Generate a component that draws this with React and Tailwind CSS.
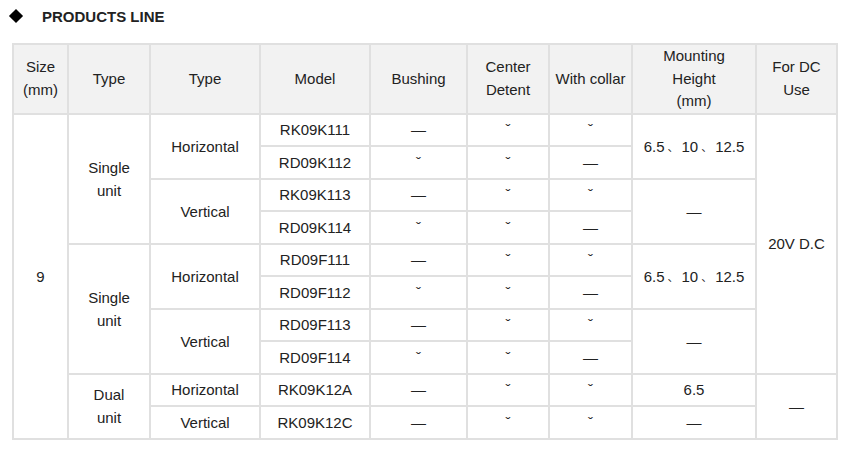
const Y = 'ˇ';
const D = '—';

const td = 'border-2 border-[#e0e0e0] px-1 text-center align-middle';
const th = 'border-2 border-[#e0e0e0] bg-[#f2f2f2] px-1 text-center align-middle font-normal leading-[22.5px]';

const Mark = ({ v }) => <span className="inline-block">{v}</span>;

// virgule CJK rendue petite, comme dans la page d'origine
const Sep = () => (
  <span className="inline-block w-[17px] text-center text-[11px] leading-none align-[1px]">、</span>
);

const Heights = () => (
  <>
    6.5<Sep />10<Sep />12.5
  </>
);

const App = () => {
  return (
    <div className="min-h-screen bg-white text-[#222] font-['Liberation_Sans','Noto_Sans_CJK_SC',sans-serif] text-[15px] leading-[23px]">
      {/* Titre */}
      <div className="h-[32px] pl-[9px] flex items-center">
        <div className="w-[13px] flex justify-center">
          <div className="w-[10px] h-[10px] bg-black rotate-45" />
        </div>
        <span className="ml-[20px] font-bold">PRODUCTS LINE</span>
      </div>

      <div className="pl-[12px] mt-[11px]">
        <table className="table-fixed border-collapse w-[824px]">
          <colgroup>
            <col className="w-[55px]" />
            <col className="w-[82px]" />
            <col className="w-[110px]" />
            <col className="w-[110px]" />
            <col className="w-[97px]" />
            <col className="w-[82px]" />
            <col className="w-[83px]" />
            <col className="w-[124px]" />
            <col className="w-[81px]" />
          </colgroup>
          <thead>
            <tr className="h-[69px]">
              <th className={th}>Size<br />(mm)</th>
              <th className={th}>Type</th>
              <th className={th}>Type</th>
              <th className={th}>Model</th>
              <th className={th}>Bushing</th>
              <th className={th}>Center<br />Detent</th>
              <th className={th}>With collar</th>
              <th className={th}>Mounting<br />Height<br />(mm)</th>
              <th className={th}>For DC<br />Use</th>
            </tr>
          </thead>
          <tbody>
            <tr className="h-[32.5px]">
              <td className={td} rowSpan={10}>9</td>
              <td className={td} rowSpan={4}>Single<br />unit</td>
              <td className={td} rowSpan={2}>Horizontal</td>
              <td className={td}>RK09K111</td>
              <td className={td}><Mark v={D} /></td>
              <td className={td}><Mark v={Y} /></td>
              <td className={td}><Mark v={Y} /></td>
              <td className={td} rowSpan={2}><Heights /></td>
              <td className={td} rowSpan={8}>20V D.C</td>
            </tr>
            <tr className="h-[32.5px]">
              <td className={td}>RD09K112</td>
              <td className={td}><Mark v={Y} /></td>
              <td className={td}><Mark v={Y} /></td>
              <td className={td}><Mark v={D} /></td>
            </tr>
            <tr className="h-[32.5px]">
              <td className={td} rowSpan={2}>Vertical</td>
              <td className={td}>RK09K113</td>
              <td className={td}><Mark v={D} /></td>
              <td className={td}><Mark v={Y} /></td>
              <td className={td}><Mark v={Y} /></td>
              <td className={td} rowSpan={2}><Mark v={D} /></td>
            </tr>
            <tr className="h-[32.5px]">
              <td className={td}>RD09K114</td>
              <td className={td}><Mark v={Y} /></td>
              <td className={td}><Mark v={Y} /></td>
              <td className={td}><Mark v={D} /></td>
            </tr>
            <tr className="h-[32.5px]">
              <td className={td} rowSpan={4}>Single<br />unit</td>
              <td className={td} rowSpan={2}>Horizontal</td>
              <td className={td}>RD09F111</td>
              <td className={td}><Mark v={D} /></td>
              <td className={td}><Mark v={Y} /></td>
              <td className={td}><Mark v={Y} /></td>
              <td className={td} rowSpan={2}><Heights /></td>
            </tr>
            <tr className="h-[32.5px]">
              <td className={td}>RD09F112</td>
              <td className={td}><Mark v={Y} /></td>
              <td className={td}><Mark v={Y} /></td>
              <td className={td}><Mark v={D} /></td>
            </tr>
            <tr className="h-[32.5px]">
              <td className={td} rowSpan={2}>Vertical</td>
              <td className={td}>RD09F113</td>
              <td className={td}><Mark v={D} /></td>
              <td className={td}><Mark v={Y} /></td>
              <td className={td}><Mark v={Y} /></td>
              <td className={td} rowSpan={2}><Mark v={D} /></td>
            </tr>
            <tr className="h-[32.5px]">
              <td className={td}>RD09F114</td>
              <td className={td}><Mark v={Y} /></td>
              <td className={td}><Mark v={Y} /></td>
              <td className={td}><Mark v={D} /></td>
            </tr>
            <tr className="h-[32.5px]">
              <td className={td} rowSpan={2}>Dual<br />unit</td>
              <td className={td}>Horizontal</td>
              <td className={td}>RK09K12A</td>
              <td className={td}><Mark v={D} /></td>
              <td className={td}><Mark v={Y} /></td>
              <td className={td}><Mark v={Y} /></td>
              <td className={td}>6.5</td>
              <td className={td} rowSpan={2}><Mark v={D} /></td>
            </tr>
            <tr className="h-[32.5px]">
              <td className={td}>Vertical</td>
              <td className={td}>RK09K12C</td>
              <td className={td}><Mark v={D} /></td>
              <td className={td}><Mark v={Y} /></td>
              <td className={td}><Mark v={Y} /></td>
              <td className={td}><Mark v={D} /></td>
            </tr>
          </tbody>
        </table>
      </div>
    </div>
  );
};

export default App;
